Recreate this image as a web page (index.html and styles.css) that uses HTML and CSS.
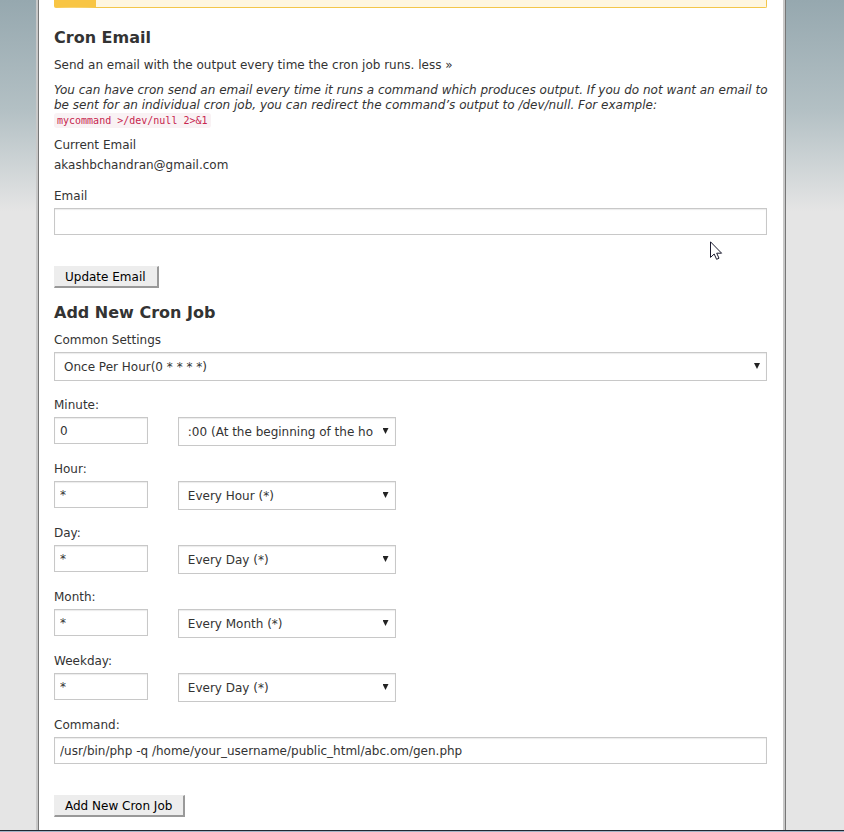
FILE: index.html
```html
<!DOCTYPE html>
<html lang="en">

<head>
    <meta charset="utf-8" />
    <title>Cron Jobs</title>
    <meta name="viewport" content="width=device-width, initial-scale=1" />
    <link rel="stylesheet" href="styles.css">
</head>

<body>
    <div class="page">
        <main class="content">
            <div class="alert"></div>

            <h2>Cron Email</h2>
            <p class="description">Send an email with the output every time the cron job runs. <a href="#" class="more">less »</a></p>
            <p class="help">You can have cron send an email every time it runs a command which produces output. If you do not want an email to be sent for an individual cron job, you can redirect the command’s output to /dev/null. For example:<br><code>mycommand &gt;/dev/null 2&gt;&amp;1</code></p>

            <form class="email-form">
                <div class="form-group">
                    <div class="label">Current Email</div>
                    <div class="label">akashbchandran@gmail.com</div>
                </div>
                <div class="form-group">
                    <label for="email">Email</label>
                    <input type="text" id="email" class="form-control" />
                </div>
                <button type="button" class="btn">Update Email</button>
            </form>

            <h2 class="section-title">Add New Cron Job</h2>
            <form>
                <div class="form-group">
                    <label for="common">Common Settings</label>
                    <div class="select">
                        <select id="common">
                            <option>Once Per Hour(0 * * * *)</option>
                        </select>
                    </div>
                </div>
                <div class="form-group unit">
                    <label for="minute">Minute:</label>
                    <div class="row">
                        <input type="text" id="minute" class="form-control" value="0" />
                        <div class="select">
                            <select aria-label="Minute options">
                                <option>:00 (At the beginning of the hour.) (0)</option>
                            </select>
                        </div>
                    </div>
                </div>
                <div class="form-group unit">
                    <label for="hour">Hour:</label>
                    <div class="row">
                        <input type="text" id="hour" class="form-control" value="*" />
                        <div class="select">
                            <select aria-label="Hour options">
                                <option>Every Hour (*)</option>
                            </select>
                        </div>
                    </div>
                </div>
                <div class="form-group unit">
                    <label for="day">Day:</label>
                    <div class="row">
                        <input type="text" id="day" class="form-control" value="*" />
                        <div class="select">
                            <select aria-label="Day options">
                                <option>Every Day (*)</option>
                            </select>
                        </div>
                    </div>
                </div>
                <div class="form-group unit">
                    <label for="month">Month:</label>
                    <div class="row">
                        <input type="text" id="month" class="form-control" value="*" />
                        <div class="select">
                            <select aria-label="Month options">
                                <option>Every Month (*)</option>
                            </select>
                        </div>
                    </div>
                </div>
                <div class="form-group unit">
                    <label for="weekday">Weekday:</label>
                    <div class="row">
                        <input type="text" id="weekday" class="form-control" value="*" />
                        <div class="select">
                            <select aria-label="Weekday options">
                                <option>Every Day (*)</option>
                            </select>
                        </div>
                    </div>
                </div>
                <div class="form-group">
                    <label for="command">Command:</label>
                    <input type="text" id="command" class="form-control" value="/usr/bin/php -q /home/your_username/public_html/abc.om/gen.php" />
                </div>
                <button type="button" class="btn">Add New Cron Job</button>
            </form>
        </main>
    </div>
    <div class="taskbar"></div>

    <svg class="cursor" width="13" height="21" viewBox="0 0 13 21" aria-hidden="true">
        <path d="M.5 .8V16.4L4.2 13L6.6 18.3L9 17.2L6.7 12.2H11.6Z" fill="#fff" stroke="#1a1a2e" />
    </svg>
</body>

</html>
```

FILE: styles.css
```css
* {
    box-sizing: border-box;
}

body {
    margin: 0;
    min-height: 100vh;
    display: flex;
    flex-direction: column;
    color: #333;
    background: #e5e5e5 linear-gradient(#96a8af 0, #b3c0c4 110px, #e5e5e5 212px) no-repeat;
    font-family: Verdana, "DejaVu Sans", sans-serif;
    font-size: 12px;
    line-height: 20px;
}

.page {
    flex: 1;
    display: flex;
    padding: 0 59px 0 38px;
}

/* double edge, light then dark, on both sides */
.content {
    flex: 1;
    min-width: 0;
    padding: 0 16px 13px 15px;
    background: #fff;
    border-left: 1px solid #777;
    border-right: 2px solid #c8c8c8;
    box-shadow: -2px 0 #c8c8c8, 1px 0 #777;
}

.alert {
    height: 8px;
    background: #fef6e0;
    border: 1px solid #f3c64a;
    border-top: 0;
    border-left: 42px solid #f8c544;
    border-radius: 0 0 2px 2px;
}

h2 {
    margin: 20px 0 7px;
    font-size: 16px;
    line-height: 20px;
}

.section-title {
    margin-top: 15px;
}

.description {
    margin: 0;
}

.more {
    color: inherit;
    text-decoration: none;
}

.help {
    margin: 8px -8px 7px 0;
    font-style: italic;
    line-height: 15px;
}

code {
    padding: 2px 3px;
    color: #c7254e;
    background: #f9f2f4;
    border-radius: 3px;
    font-family: Consolas, "DejaVu Sans Mono", monospace;
    font-size: 10px;
    font-style: normal;
}

.form-group {
    margin-bottom: 14px;
}

.unit {
    margin-bottom: 13px;
}

.email-form .form-group {
    margin-bottom: 11px;
}

label {
    display: block;
    margin-bottom: 2px;
}

.row {
    display: grid;
    grid-template-columns: repeat(6, 1fr);
    column-gap: 30px;
}

.row .select {
    grid-column: span 2;
}

.form-control,
select {
    display: block;
    width: 100%;
    min-width: 0;
    color: #333;
    background: #fff;
    border: 1px solid #c8c8c8;
    border-radius: 0;
    box-shadow: inset 0 1px 1px rgba(0, 0, 0, .08);
    font-family: inherit;
    font-size: 12px;
}

.form-control {
    height: 27px;
    padding: 0 5px;
}

.select {
    position: relative;
}

select {
    height: 29px;
    padding: 0 22px 0 9px;
    appearance: none;
}

.select::after {
    content: "";
    position: absolute;
    top: 11px;
    right: 7px;
    width: 6px;
    height: 6px;
    background: #222;
    clip-path: polygon(0 0, 100% 0, 50% 100%);
    pointer-events: none;
}

.btn {
    display: block;
    height: 22px;
    margin-top: 31px;
    padding: 1px 11px 0 10px;
    color: #000;
    background: #ededed;
    border: 1px solid #ededed;
    border-right: 2px solid #999;
    border-bottom: 2px solid #999;
    font-family: inherit;
    font-size: 12px;
    line-height: 18px;
}

.taskbar {
    height: 2px;
    background: #a3b3c6;
    border-top: 1px solid #1f2933;
}

.cursor {
    position: absolute;
    top: 241px;
    left: 710px;
}
```
